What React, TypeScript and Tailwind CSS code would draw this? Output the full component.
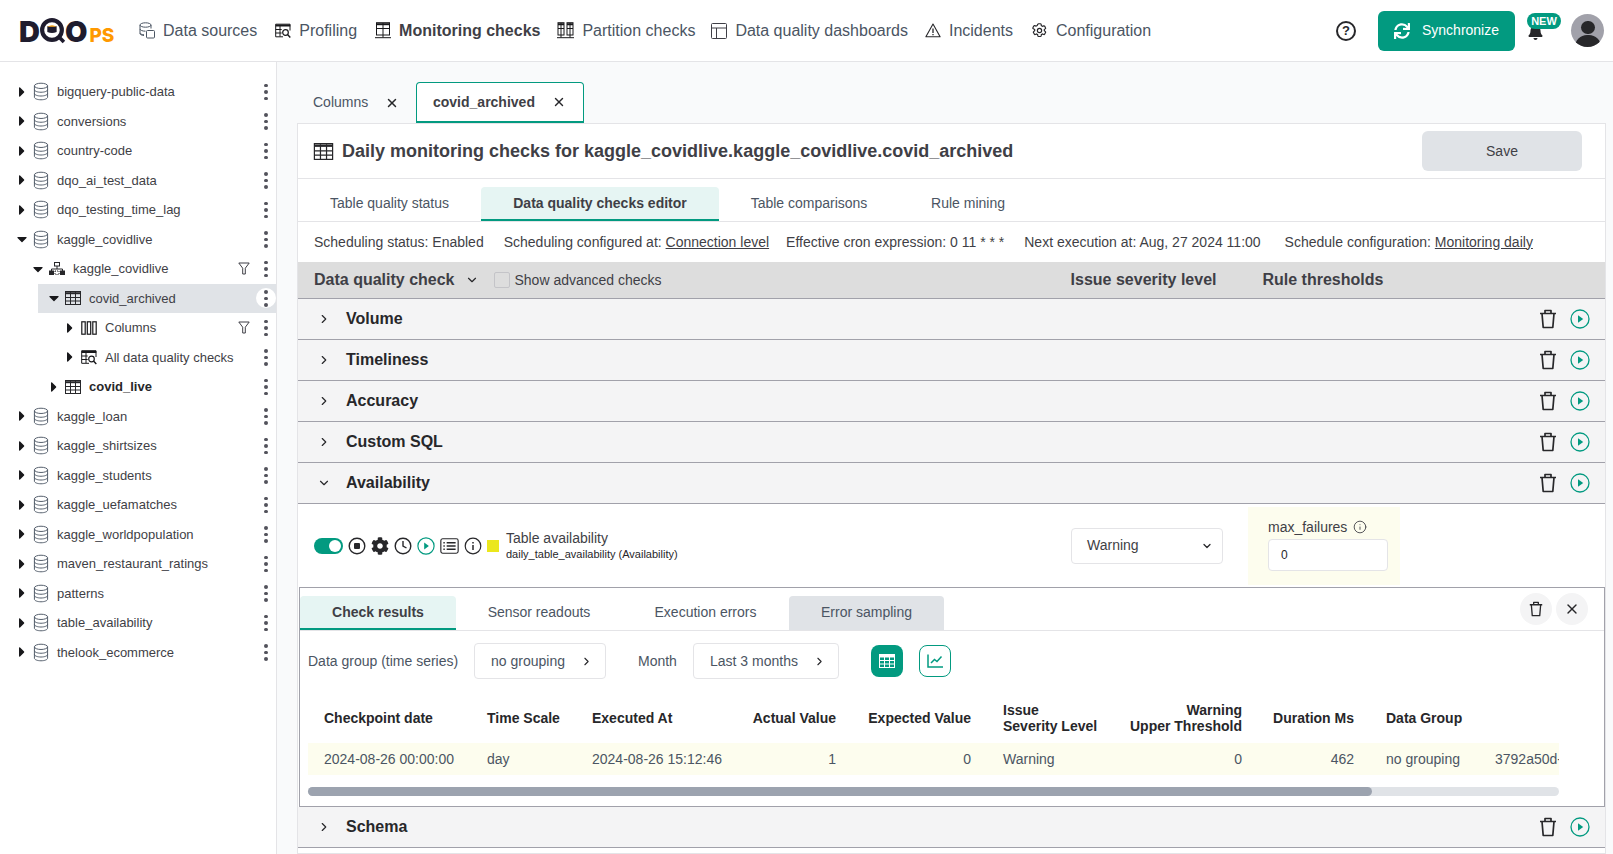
import type { ReactNode } from "react";
import { X, ChevronRight, ChevronDown, Info } from "lucide-react";
import { FaSync, FaBell, FaCog, FaCaretRight, FaCaretDown } from "react-icons/fa";

const Db = ({ className = "w-[17px] h-[19px]" }: { className?: string }) => (
  <svg viewBox="0 0 17 19" className={className} fill="none" stroke="#4b5563" strokeWidth="1">
    <ellipse cx="8.5" cy="3.5" rx="7" ry="2.8" />
    <path d="M1.5 3.5v12c0 1.6 3.1 2.8 7 2.8s7-1.2 7-2.8v-12M1.5 7.5c0 1.6 3.1 2.8 7 2.8s7-1.2 7-2.8M1.5 11.5c0 1.6 3.1 2.8 7 2.8s7-1.2 7-2.8" />
  </svg>
);

const Grid = ({ className = "w-[16px] h-[14px]" }: { className?: string }) => (
  <svg viewBox="0 0 16 14" className={className} fill="none" stroke="#27272a" strokeWidth="1">
    <rect x="0.5" y="0.5" width="15" height="13" />
    <path d="M0.5 2.2h15" strokeWidth="2" />
    <path d="M0.5 6.5h15M0.5 10h15M5.5 1v13M10.5 1v13" />
  </svg>
);

const Dots = ({ active = false }: { active?: boolean }) => (
  <div className={`w-[20px] h-[20px] rounded-full flex flex-col items-center justify-center gap-[3px] ${active ? "bg-white" : ""}`}>
    <span className="w-[3.5px] h-[3.5px] rounded-full bg-[#52525b]" />
    <span className="w-[3.5px] h-[3.5px] rounded-full bg-[#52525b]" />
    <span className="w-[3.5px] h-[3.5px] rounded-full bg-[#52525b]" />
  </div>
);

const Funnel = () => (
  <svg viewBox="0 0 12 13" className="w-[12px] h-[13px]" fill="none" stroke="#3f3f46" strokeWidth="1">
    <path d="M0.8 1h10.4L7.3 6.2v5.8H4.7V6.2z" strokeLinejoin="round" />
  </svg>
);

const Columns = () => (
  <svg viewBox="0 0 16 14" className="w-[16px] h-[14px]" fill="none" stroke="#18181b" strokeWidth="1.2">
    <rect x="0.8" y="0.8" width="3.4" height="12.4" />
    <rect x="6.3" y="0.8" width="3.4" height="12.4" />
    <rect x="11.8" y="0.8" width="3.4" height="12.4" />
  </svg>
);

const TableSearch = ({ className = "w-[16px] h-[15px]" }: { className?: string }) => (
  <svg viewBox="0 0 16 15" className={className} fill="none" stroke="#18181b" strokeWidth="1">
    <path d="M15 7V0.7H0.7v12.6H8" />
    <path d="M0.7 2h14.6" strokeWidth="2" />
    <path d="M0.7 6h6M0.7 9.5h6M5 2v11" />
    <circle cx="10.5" cy="9" r="2.8" strokeWidth="1.2" />
    <path d="M12.5 11l2.8 3" strokeWidth="1.4" />
  </svg>
);

const Schema = () => (
  <svg viewBox="0 0 16 13" className="w-[16px] h-[13px]" fill="none" stroke="#27272a" strokeWidth="1">
    <rect x="5.5" y="0.5" width="5" height="3.5" />
    <path d="M8 4v3M2.5 9V7h11v2" />
    <rect x="0.5" y="9" width="4" height="3.5" fill="#27272a" />
    <rect x="6" y="9" width="4" height="3.5" strokeDasharray="1 1" />
    <rect x="11.5" y="9" width="4" height="3.5" fill="#27272a" />
  </svg>
);

const Trash = ({ className = "w-[18px] h-[20px]" }: { className?: string }) => (
  <svg viewBox="0 0 18 20" className={className} fill="none" stroke="#27272a" strokeWidth="1.7">
    <path d="M1 4.5h16M6 4.5V1.5h6v3M3 4.5l1.2 14h9.6l1.2-14" strokeLinejoin="round" />
  </svg>
);

const PlayCircle = ({ className = "w-[20px] h-[20px]" }: { className?: string }) => (
  <svg viewBox="0 0 20 20" className={className} fill="none">
    <circle cx="10" cy="10" r="9" stroke="#029a80" strokeWidth="1.3" />
    <path d="M8 6.2l5.2 3.8L8 13.8z" fill="#029a80" />
  </svg>
);

const Logo = () => (
  <div className="flex items-end w-[97px] font-['Inter',sans-serif] font-black text-[#1f1c2e] leading-none">
    <span className="text-[29px] leading-[25px]">D</span>
    <svg viewBox="0 0 26 26" className="w-[27px] h-[27px] -ml-[1px]" fill="none">
      <circle cx="12.5" cy="12.5" r="9.5" stroke="#1f1c2e" strokeWidth="4" />
      <path d="M8 9h9v5.5q-4.500 2-9 0z" fill="#1f1c2e" />
      <path d="M8 9.500q4.500-3 9 0z" fill="#f59e0b" />
      <path d="M19 19l5 5" stroke="#1f1c2e" strokeWidth="3.500" />
    </svg>
    <span className="text-[29px] leading-[25px] -ml-[1px]">O</span>
    <span className="text-[19px] leading-[17px] ml-[2px] text-[#ff9900] font-extrabold">PS</span>
  </div>
);

const navItems: { label: string; bold?: boolean; gap: string; icon: ReactNode }[] = [
  {
    label: "Data sources",
    gap: "mr-[18px]",
    icon: (
      <svg viewBox="0 0 16 17" className="w-[16px] h-[17px]" fill="none" stroke="#4b5563" strokeWidth="1">
        <ellipse cx="6.500" cy="3" rx="5.500" ry="2.200" />
        <path d="M1 3v8.500c0 1 1.500 1.800 4 2M12 3v3.500M1 7c0 1.200 2.500 2.200 5.500 2.200M1 11c0 .8 1.500 1.600 4 1.800" />
        <rect x="7.500" y="8.500" width="8" height="7.500" rx="1" fill="white" />
      </svg>
    ),
  },
  {
    label: "Profiling",
    gap: "mr-[18px]",
    icon: <TableSearch className="w-[16px] h-[16px]" />,
  },
  {
    label: "Monitoring checks",
    bold: true,
    gap: "mr-[17px]",
    icon: (
      <svg viewBox="0 0 16 17" className="w-[16px] h-[17px]" fill="none" stroke="#18181b" strokeWidth="1">
        <rect x="1.500" y="0.700" width="13" height="12.300" />
        <path d="M1.500 2.200h13" strokeWidth="2" />
        <path d="M1.500 6.500h13M8 1v12M8 13v2.500M0 15.700h16" />
      </svg>
    ),
  },
  {
    label: "Partition checks",
    gap: "mr-[16px]",
    icon: (
      <svg viewBox="0 0 17 17" className="w-[17px] h-[17px]" fill="none" stroke="#18181b" strokeWidth="1">
        <rect x="1" y="0.700" width="6" height="12.300" />
        <rect x="10" y="0.700" width="6" height="12.300" />
        <path d="M1 2.200h6M10 2.200h6" strokeWidth="2" />
        <path d="M1 6.500h6M10 6.500h6M4 1v12M13 1v12M4 13v2.500M13 13v2.500M0 15.700h17" />
      </svg>
    ),
  },
  {
    label: "Data quality dashboards",
    gap: "mr-[17px]",
    icon: (
      <svg viewBox="0 0 16 16" className="w-[16px] h-[16px]" fill="none" stroke="#3f3f46" strokeWidth="1">
        <rect x="0.500" y="0.500" width="15" height="15" rx="1" />
        <path d="M0.500 5h15M5.500 5v10.500" />
      </svg>
    ),
  },
  {
    label: "Incidents",
    gap: "mr-[18px]",
    icon: (
      <svg viewBox="0 0 16 15" className="w-[16px] h-[15px]" fill="none" stroke="#27272a" strokeWidth="1.100">
        <path d="M8 1L0.900 13.800h14.200z" strokeLinejoin="round" />
        <path d="M8 5.500v4.500M8 11v1.300" strokeWidth="1.300" />
      </svg>
    ),
  },
  {
    label: "Configuration",
    gap: "",
    icon: (
      <svg viewBox="0 0 24 24" className="w-[17px] h-[17px]" fill="none" stroke="#27272a" strokeWidth="1.700">
        <path d="M9.700 3.300a1 1 0 0 1 1-.800h2.600a1 1 0 0 1 1 .800l.3 1.900 1.600.900 1.800-.7a1 1 0 0 1 1.200.4l1.300 2.300a1 1 0 0 1-.2 1.300l-1.500 1.200v1.800l1.500 1.200a1 1 0 0 1 .2 1.300l-1.300 2.300a1 1 0 0 1-1.200.4l-1.800-.7-1.600.9-.3 1.900a1 1 0 0 1-1 .8h-2.600a1 1 0 0 1-1-.8l-.3-1.900-1.600-.9-1.800.7a1 1 0 0 1-1.200-.4l-1.300-2.300a1 1 0 0 1 .2-1.300l1.500-1.200v-1.800L2.900 9.200a1 1 0 0 1-.2-1.300L4 5.600a1 1 0 0 1 1.200-.4l1.800.7 1.600-.9z" />
        <circle cx="12" cy="12" r="3" />
      </svg>
    ),
  },
];

function TopBar() {
  return (
    <header className="h-[62px] shrink-0 flex items-center bg-white border-b border-[#e4e4e7] pl-[19px] pr-[9px]">
      <div className="w-[120px]">
        <Logo />
      </div>
      <nav className="flex items-center text-[16px] text-[#4b5563]">
        {navItems.map((n) => (
          <div key={n.label} className={`flex items-center gap-[8px] ${n.gap}`}>
            {n.icon}
            <span className={n.bold ? "font-bold text-[#3f3f46]" : ""}>{n.label}</span>
          </div>
        ))}
      </nav>
      <div className="ml-auto flex items-center">
        <div className="w-[20px] h-[20px] rounded-full border-2 border-[#27272a] flex items-center justify-center text-[13px] font-bold text-[#27272a] mr-[22px]">
          ?
        </div>
        <button className="w-[137px] h-[40px] rounded-md bg-[#029a80] text-white text-[14px] font-medium flex items-center justify-center gap-[12px] mr-[12px]">
          <FaSync className="w-[16px] h-[16px]" />
          Synchronize
        </button>
        <div className="relative w-[44px] h-[40px] flex items-center">
          <FaBell className="w-[15px] h-[16px] text-[#27272a] mt-[3px] ml-[1px]" />
          <span className="absolute left-0 top-[2px] w-[34px] h-[16px] rounded-full bg-[#029a80] text-white text-[11px] font-bold leading-[16px] text-center">
            NEW
          </span>
        </div>
        <div className="w-[33px] h-[33px] rounded-full bg-[#a1a1aa] overflow-hidden flex flex-col items-center">
          <span className="w-[14px] h-[14px] rounded-full bg-[#27272a] mt-[7px]" />
          <span className="w-[26px] h-[14px] rounded-t-full bg-[#27272a] mt-[1px]" />
        </div>
      </div>
    </header>
  );
}

const tree: { label: string; level: number; open?: boolean; kind: string; bold?: boolean; filter?: boolean; active?: boolean }[] = [
  { label: "bigquery-public-data", level: 0, kind: "db" },
  { label: "conversions", level: 0, kind: "db" },
  { label: "country-code", level: 0, kind: "db" },
  { label: "dqo_ai_test_data", level: 0, kind: "db" },
  { label: "dqo_testing_time_lag", level: 0, kind: "db" },
  { label: "kaggle_covidlive", level: 0, kind: "db", open: true },
  { label: "kaggle_covidlive", level: 1, kind: "schema", open: true, filter: true },
  { label: "covid_archived", level: 2, kind: "table", open: true, active: true },
  { label: "Columns", level: 3, kind: "columns", filter: true },
  { label: "All data quality checks", level: 3, kind: "checks" },
  { label: "covid_live", level: 2, kind: "table", bold: true },
  { label: "kaggle_loan", level: 0, kind: "db" },
  { label: "kaggle_shirtsizes", level: 0, kind: "db" },
  { label: "kaggle_students", level: 0, kind: "db" },
  { label: "kaggle_uefamatches", level: 0, kind: "db" },
  { label: "kaggle_worldpopulation", level: 0, kind: "db" },
  { label: "maven_restaurant_ratings", level: 0, kind: "db" },
  { label: "patterns", level: 0, kind: "db" },
  { label: "table_availability", level: 0, kind: "db" },
  { label: "thelook_ecommerce", level: 0, kind: "db" },
];

const levelPad = ["pl-[15px]", "pl-[31px]", "pl-[47px]", "pl-[63px]"];

function TreeIcon({ kind }: { kind: string }) {
  if (kind === "db") return <Db />;
  if (kind === "schema") return <Schema />;
  if (kind === "table") return <Grid />;
  if (kind === "columns") return <Columns />;
  return <TableSearch />;
}

function Sidebar() {
  return (
    <aside className="w-[277px] shrink-0 bg-white border-r border-[#e4e4e7] pt-[15px] text-[13px] text-[#3f3f46]">
      {tree.map((t, i) => (
        <div key={i} className={`h-[29.500px] flex items-center ${levelPad[t.level]}`}>
          <div className={`flex items-center flex-1 h-full ${t.active ? "bg-[#e0e3e7] -ml-[9px] pl-[9px]" : ""}`}>
            <span className="w-[14px] flex justify-center text-[#18181b] shrink-0">
              {t.open ? <FaCaretDown className="w-[16px] h-[16px] shrink-0" /> : <FaCaretRight className="w-[16px] h-[16px] shrink-0" />}
            </span>
            <span className="w-[16px] ml-[4px] flex justify-center shrink-0">
              <TreeIcon kind={t.kind} />
            </span>
            <span className={`ml-[8px] flex-1 ${t.bold ? "font-bold text-[#27272a]" : ""}`}>{t.label}</span>
            {t.filter && (
              <span className="mr-[6px] flex">
                <Funnel />
              </span>
            )}
            <span className="flex">
              <Dots active={t.active} />
            </span>
          </div>
        </div>
      ))}
    </aside>
  );
}

const categories = ["Volume", "Timeliness", "Accuracy", "Custom SQL"];

function CategoryRow({ label, open = false }: { label: string; open?: boolean }) {
  return (
    <div className="h-[41px] shrink-0 flex items-center bg-[#f4f4f5] border-b border-[#a1a1aa] pl-[19px] pr-[15px]">
      {open ? <ChevronDown className="w-[14px] h-[14px] text-[#27272a]" strokeWidth={2} /> : <ChevronRight className="w-[14px] h-[14px] text-[#27272a]" strokeWidth={2} />}
      <span className="ml-[15px] text-[16px] font-bold text-[#27272a]">{label}</span>
      <div className="ml-auto flex items-center gap-[13px]">
        <Trash />
        <PlayCircle />
      </div>
    </div>
  );
}

function CheckRow() {
  return (
    <div className="h-[83px] shrink-0 flex items-center pl-[16px] bg-white relative">
      <div className="w-[29px] h-[16px] rounded-full bg-[#029a80] flex items-center justify-end pr-[2px]">
        <span className="w-[12px] h-[12px] rounded-full bg-white" />
      </div>
      <div className="flex items-center gap-[5px] ml-[5px]">
        <svg viewBox="0 0 18 18" className="w-[18px] h-[18px]" fill="none">
          <circle cx="9" cy="9" r="7.800" stroke="#27272a" strokeWidth="1.400" />
          <rect x="6" y="6" width="6" height="6" rx="1" fill="#27272a" />
        </svg>
        <FaCog className="w-[18px] h-[18px] text-[#27272a]" />
        <svg viewBox="0 0 18 18" className="w-[18px] h-[18px]" fill="none" stroke="#27272a" strokeWidth="1.400">
          <circle cx="9" cy="9" r="7.800" />
          <path d="M9 4v5l3.500 2" />
        </svg>
        <PlayCircle className="w-[18px] h-[18px]" />
        <svg viewBox="0 0 20 17" className="w-[19px] h-[16px]" fill="none" stroke="#27272a" strokeWidth="1.200">
          <rect x="0.800" y="0.800" width="18.400" height="15.400" rx="2" />
          <path d="M3.500 5h1.500M7 5h9.500M3.500 8.500h1.500M7 8.500h9.500M3.500 12h1.500M7 12h9.500" strokeWidth="1.500" />
        </svg>
        <svg viewBox="0 0 18 18" className="w-[18px] h-[18px]" fill="none" stroke="#27272a" strokeWidth="1.200">
          <circle cx="9" cy="9" r="7.800" />
          <path d="M9 8v5M9 5v1.400" strokeWidth="1.500" />
        </svg>
      </div>
      <span className="w-[12px] h-[12px] bg-[#ebe71c] ml-[5px]" />
      <div className="ml-[7px] flex flex-col">
        <span className="text-[14px] leading-[16px] text-[#3f3f46]">Table availability</span>
        <span className="text-[11px] leading-[15px] mt-[1px] text-[#27272a]">daily_table_availability (Availability)</span>
      </div>
      <div className="ml-auto flex items-center mr-[205px]">
        <div className="w-[152px] h-[36px] border border-[#e4e4e7] rounded flex items-center justify-between pl-[15px] pr-[9px] text-[14px] text-[#3f3f46]">
          Warning
          <ChevronDown className="w-[12px] h-[12px] text-[#27272a]" strokeWidth={2.500} />
        </div>
        <div className="w-[152px] h-[78px] ml-[25px] bg-[#fdfdee] pl-[20px] pt-[12px] text-[14px] text-[#3f3f46]">
          <div className="flex items-center gap-[6px] leading-[16px]">
            max_failures
            <Info className="w-[14px] h-[14px]" strokeWidth={1.500} />
          </div>
          <div className="w-[120px] h-[32px] mt-[4px] bg-white border border-[#e4e4e7] rounded flex items-center pl-[12px] text-[12px] text-[#27272a]">
            0
          </div>
        </div>
      </div>
    </div>
  );
}

const columns = [
  { h: "Checkpoint date", v: "2024-08-26 00:00:00", w: "w-[163px]" },
  { h: "Time Scale", v: "day", w: "w-[105px]" },
  { h: "Executed At", v: "2024-08-26 15:12:46", w: "w-[156px]" },
  { h: "Actual Value", v: "1", w: "w-[88px]", right: true },
  { h: "Expected Value", v: "0", w: "w-[135px]", right: true },
  { h: <>Issue<br />Severity Level</>, v: "Warning", w: "w-[32px] whitespace-nowrap ml-[32px]" },
  { h: <>Warning<br />Upper Threshold</>, v: "0", w: "w-[207px]", right: true },
  { h: "Duration Ms", v: "462", w: "w-[112px]", right: true },
  { h: "Data Group", v: "no grouping", w: "w-[109px] ml-[32px]" },
  { h: "", v: "3792a50d-", w: "w-[64px] overflow-hidden" },
];

function ResultsPanel() {
  return (
    <div className="h-[220px] shrink-0 ml-[1px] border border-[#a1a1aa] bg-white flex flex-col">
      <div className="h-[43px] shrink-0 flex items-end border-b border-[#e4e4e7] text-[14px] text-[#4b5563] relative">
        <div className="w-[156px] h-[34px] bg-[#e6f5f3] border-b-2 border-[#029a80] rounded-t flex items-center justify-center font-bold text-[#3f3f46]">
          Check results
        </div>
        <div className="w-[160px] ml-[3px] h-[34px] pb-[2px] flex items-center justify-center">Sensor readouts</div>
        <div className="w-[161px] h-[34px] pb-[2px] flex items-center justify-center ml-[6px]">Execution errors</div>
        <div className="w-[155px] h-[34px] pb-[2px] bg-[#e0e3e7] rounded-t flex items-center justify-center ml-[3px]">Error sampling</div>
        <div className="ml-auto self-center flex items-center gap-[4px] mr-[16px]">
          <span className="w-[32px] h-[32px] rounded-full bg-[#f4f4f5] flex items-center justify-center">
            <Trash className="w-[14px] h-[16px]" />
          </span>
          <span className="w-[32px] h-[32px] rounded-full bg-[#f4f4f5] flex items-center justify-center">
            <X className="w-[16px] h-[16px] text-[#27272a]" strokeWidth={2} />
          </span>
        </div>
      </div>
      <div className="h-[36px] mt-[12px] shrink-0 flex items-center pl-[8px] text-[14px] text-[#4b5563]">
        <span className="w-[166px]">Data group (time series)</span>
        <div className="w-[132px] h-[36px] border border-[#e4e4e7] rounded flex items-center justify-between pl-[16px] pr-[12px]">
          no grouping
          <ChevronRight className="w-[13px] h-[13px] text-[#27272a]" strokeWidth={2} />
        </div>
        <span className="ml-[32px] w-[55px]">Month</span>
        <div className="w-[146px] h-[36px] border border-[#e4e4e7] rounded flex items-center justify-between pl-[16px] pr-[12px]">
          Last 3 months
          <ChevronRight className="w-[13px] h-[13px] text-[#27272a]" strokeWidth={2} />
        </div>
        <div className="ml-[32px] w-[32px] h-[32px] rounded-lg bg-[#029a80] flex items-center justify-center">
          <svg viewBox="0 0 16 14" className="w-[16px] h-[14px]" fill="none" stroke="white" strokeWidth="1">
            <rect x="0.500" y="0.500" width="15" height="13" />
            <path d="M0.500 2h15" strokeWidth="3" />
            <path d="M0.500 6.500h15M0.500 10h15M5.500 1v13M10.500 1v13" />
          </svg>
        </div>
        <div className="ml-[16px] w-[32px] h-[32px] rounded-lg border border-[#029a80] flex items-center justify-center">
          <svg viewBox="0 0 16 14" className="w-[16px] h-[14px]" fill="none" stroke="#029a80" strokeWidth="1.500">
            <path d="M1 0.500v12.500h15M4 9l3.500-3.500 2.500 2 4.500-5" />
          </svg>
        </div>
      </div>
      <div className="mx-[8px] mt-[14px] w-[1251px] overflow-hidden text-[14px]">
        <div className="flex items-center h-[50px] font-bold text-[#27272a] leading-[16px] pl-[16px]">
          {columns.map((c, i) => (
            <div key={i} className={`shrink-0 ${c.w} ${c.right ? "text-right" : ""}`}>
              {c.h}
            </div>
          ))}
        </div>
        <div className="flex items-center h-[32px] bg-[#fdfdee] text-[#4b5563] pl-[16px] whitespace-nowrap">
          {columns.map((c, i) => (
            <div key={i} className={`shrink-0 ${c.w} ${c.right ? "text-right" : ""}`}>
              {c.v}
            </div>
          ))}
        </div>
      </div>
      <div className="mx-[8px] mt-[12px] w-[1251px] h-[9px] rounded-full bg-[#e0e3e7]">
        <div className="w-[1064px] h-full rounded-full bg-[#9ca3af]" />
      </div>
    </div>
  );
}

function Content() {
  return (
    <main className="flex-1 min-w-0 bg-[#f9fafb] pt-[20px] flex flex-col overflow-hidden">
      <div className="h-[41px] shrink-0 flex items-stretch pl-[20px] text-[14px]">
        <div className="w-[102px] flex items-center justify-between pl-[16px] text-[#4b5563]">
          Columns
          <X className="w-[14px] h-[14px] text-[#27272a]" strokeWidth={2.500} />
        </div>
        <div className="ml-[17px] w-[168px] border border-b-2 border-[#029a80] rounded-t bg-white flex items-center justify-between pl-[16px] pr-[17px] font-bold text-[#3f3f46]">
          covid_archived
          <X className="w-[14px] h-[14px] text-[#27272a]" strokeWidth={2.500} />
        </div>
      </div>
      <section className="ml-[20px] mr-[7px] flex-1 min-h-0 bg-white border border-[#e4e4e7] flex flex-col">
        <div className="h-[55px] shrink-0 flex items-center pl-[15px] pr-[23px] border-b border-[#e4e4e7]">
          <Grid className="w-[21px] h-[17px]" />
          <h1 className="ml-[8px] text-[18px] font-bold text-[#3f3f46]">
            Daily monitoring checks for kaggle_covidlive.kaggle_covidlive.covid_archived
          </h1>
          <button className="ml-auto w-[160px] h-[40px] rounded-md bg-[#e0e3e7] text-[14px] text-[#3f3f46]">Save</button>
        </div>
        <div className="h-[43px] shrink-0 flex items-end border-b border-[#e4e4e7] text-[14px] text-[#4b5563]">
          <div className="w-[183px] h-[34px] pb-[2px] flex items-center justify-center">Table quality status</div>
          <div className="w-[238px] h-[34px] bg-[#e6f5f3] border-b-2 border-[#029a80] rounded-t flex items-center justify-center font-bold text-[#3f3f46]">
            Data quality checks editor
          </div>
          <div className="w-[180px] h-[34px] pb-[2px] flex items-center justify-center">Table comparisons</div>
          <div className="w-[110px] ml-[14px] h-[34px] pb-[2px] flex items-center justify-center">Rule mining</div>
        </div>
        <div className="h-[40px] shrink-0 flex items-center pl-[16px] text-[14px] text-[#3f3f46] whitespace-nowrap">
          <span className="mr-[20px]">Scheduling status: Enabled</span>
          <span className="mr-[17px]">
            Scheduling configured at: <span className="underline">Connection level</span>
          </span>
          <span className="mr-[20px]">Effective cron expression: 0 11 * * *</span>
          <span className="mr-[24px]">Next execution at: Aug, 27 2024 11:00</span>
          <span>
            Schedule configuration: <span className="underline">Monitoring daily</span>
          </span>
        </div>
        <div className="h-[37px] shrink-0 flex items-center bg-[#dddddd] border-b border-[#a1a1aa] pl-[16px] text-[#3f3f46]">
          <span className="text-[16px] font-bold">Data quality check</span>
          <ChevronDown className="w-[14px] h-[14px] ml-[10px] text-[#27272a]" strokeWidth={2} />
          <span className="w-[16px] h-[16px] border border-[#c4c4c8] rounded-[2px] ml-[15px]" />
          <span className="ml-[5px] text-[14px]">Show advanced checks</span>
          <span className="ml-[409px] text-[16px] font-bold">Issue severity level</span>
          <span className="ml-[46px] text-[16px] font-bold">Rule thresholds</span>
        </div>
        {categories.map((c) => (
          <CategoryRow key={c} label={c} />
        ))}
        <CategoryRow label="Availability" open />
        <CheckRow />
        <ResultsPanel />
        <CategoryRow label="Schema" />
      </section>
    </main>
  );
}

export default function App() {
  return (
    <div className="h-[854px] w-[1613px] flex flex-col overflow-hidden font-['Liberation_Sans',Arial,sans-serif]">
      <TopBar />
      <div className="flex flex-1 min-h-0">
        <Sidebar />
        <Content />
      </div>
    </div>
  );
}
